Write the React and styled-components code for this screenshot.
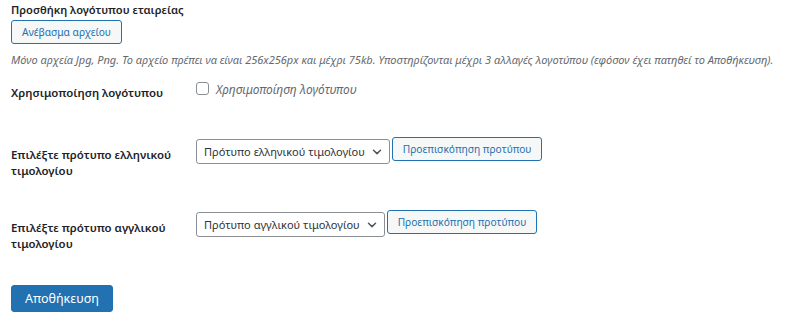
import React from "react";
import styled, { createGlobalStyle } from "styled-components";

const Global = createGlobalStyle`
  html, body { margin: 0; padding: 0; background: #ffffff; }
  body { font-family: "Noto Sans", "Open Sans", sans-serif; color: #1d2327; }
  * { box-sizing: border-box; }
`;

const Page = styled.div`
  padding: 2px 11px 20px;
  width: 800px;
`;

const Title = styled.div`
  font-size: 11.1px;
  font-weight: 600;
  line-height: 16px;
  color: #1d2327;
`;

const Button = styled.button`
  display: inline-flex;
  align-items: center;
  justify-content: center;
  font-family: inherit;
  font-size: ${(p) => (p.$primary ? "12.5px" : "10.2px")};
  height: ${(p) => (p.$primary ? "27px" : "24px")};
  padding: 0 ${(p) => (p.$primary ? "13px" : "10px")};
  border-radius: 3px;
  border: 1px solid #2271b1;
  background: ${(p) => (p.$primary ? "#2271b1" : "#f6f7f7")};
  color: ${(p) => (p.$primary ? "#ffffff" : "#2271b1")};
  margin-top: ${(p) => p.$top || 0}px;
  white-space: nowrap;
  cursor: pointer;
`;

const Description = styled.p`
  margin: 9px 0 0;
  font-size: 11px;
  line-height: 14px;
  font-style: italic;
  color: #646970;
  white-space: nowrap;
`;

const Row = styled.div`
  display: flex;
  align-items: flex-start;
`;

const Label = styled.div`
  width: 185px;
  flex: none;
  padding: ${(p) => p.$top}px 10px ${(p) => p.$bottom}px 0;
  font-size: 11.4px;
  font-weight: 600;
  line-height: 16px;
  color: #1d2327;
`;

const Field = styled.div`
  display: flex;
  align-items: flex-start;
  gap: 2px;
  padding-top: ${(p) => p.$top}px;
`;

const CheckLabel = styled.label`
  display: flex;
  align-items: center;
  gap: 7px;
  font-size: 11.9px;
  font-style: italic;
  line-height: 16px;
  color: #646970;
`;

const CheckBox = styled.span`
  width: 13px;
  height: 13px;
  border: 1px solid #8c8f94;
  border-radius: 3px;
  background: #fff;
  margin-top: -2px;
`;

const SelectBox = styled.div`
  display: inline-flex;
  align-items: center;
  gap: 7px;
  height: 25px;
  margin-top: 2px;
  padding: 0 7px 0 7px;
  border: 1px solid #8c8f94;
  border-radius: 3px;
  background: #fff;
  font-size: 11px;
  color: #2c3338;
  white-space: nowrap;
`;

const Chevron = () => (
  <svg width="10" height="10" viewBox="0 0 10 10" aria-hidden="true">
    <path d="M1.5 3.2 L5 6.6 L8.5 3.2" fill="none" stroke="#50575e" strokeWidth="1.5" strokeLinecap="round" strokeLinejoin="round" />
  </svg>
);

const Footer = styled.div`
  margin-top: 17px;
`;

export default function App() {
  return (
    <Page>
      <Global />
      <Title>Προσθήκη λογότυπου εταιρείας</Title>
      <Button $top={2}>Ανέβασμα αρχείου</Button>
      <Description>
        Μόνο αρχεία Jpg, Png. Το αρχείο πρέπει να είναι 256x256px και μέχρι 75kb. Υποστηρίζονται μέχρι 3 αλλαγές λογοτύπου (εφόσον έχει πατηθεί το Αποθήκευση).
      </Description>

      <Row>
        <Label $top={18} $bottom={21}>Χρησιμοποίηση λογότυπου</Label>
        <Field $top={14}>
          <CheckLabel>
            <CheckBox />
            Χρησιμοποίηση λογότυπου
          </CheckLabel>
        </Field>
      </Row>

      <Row>
        <Label $top={25} $bottom={16}>Επιλέξτε πρότυπο ελληνικού τιμολογίου</Label>
        <Field $top={15}>
          <SelectBox>
            Πρότυπο ελληνικού τιμολογίου
            <Chevron />
          </SelectBox>
          <Button>Προεπισκόπηση προτύπου</Button>
        </Field>
      </Row>

      <Row>
        <Label $top={25} $bottom={16}>Επιλέξτε πρότυπο αγγλικού τιμολογίου</Label>
        <Field $top={15}>
          <SelectBox>
            Πρότυπο αγγλικού τιμολογίου
            <Chevron />
          </SelectBox>
          <Button>Προεπισκόπηση προτύπου</Button>
        </Field>
      </Row>

      <Footer>
        <Button $primary>Αποθήκευση</Button>
      </Footer>
    </Page>
  );
}
